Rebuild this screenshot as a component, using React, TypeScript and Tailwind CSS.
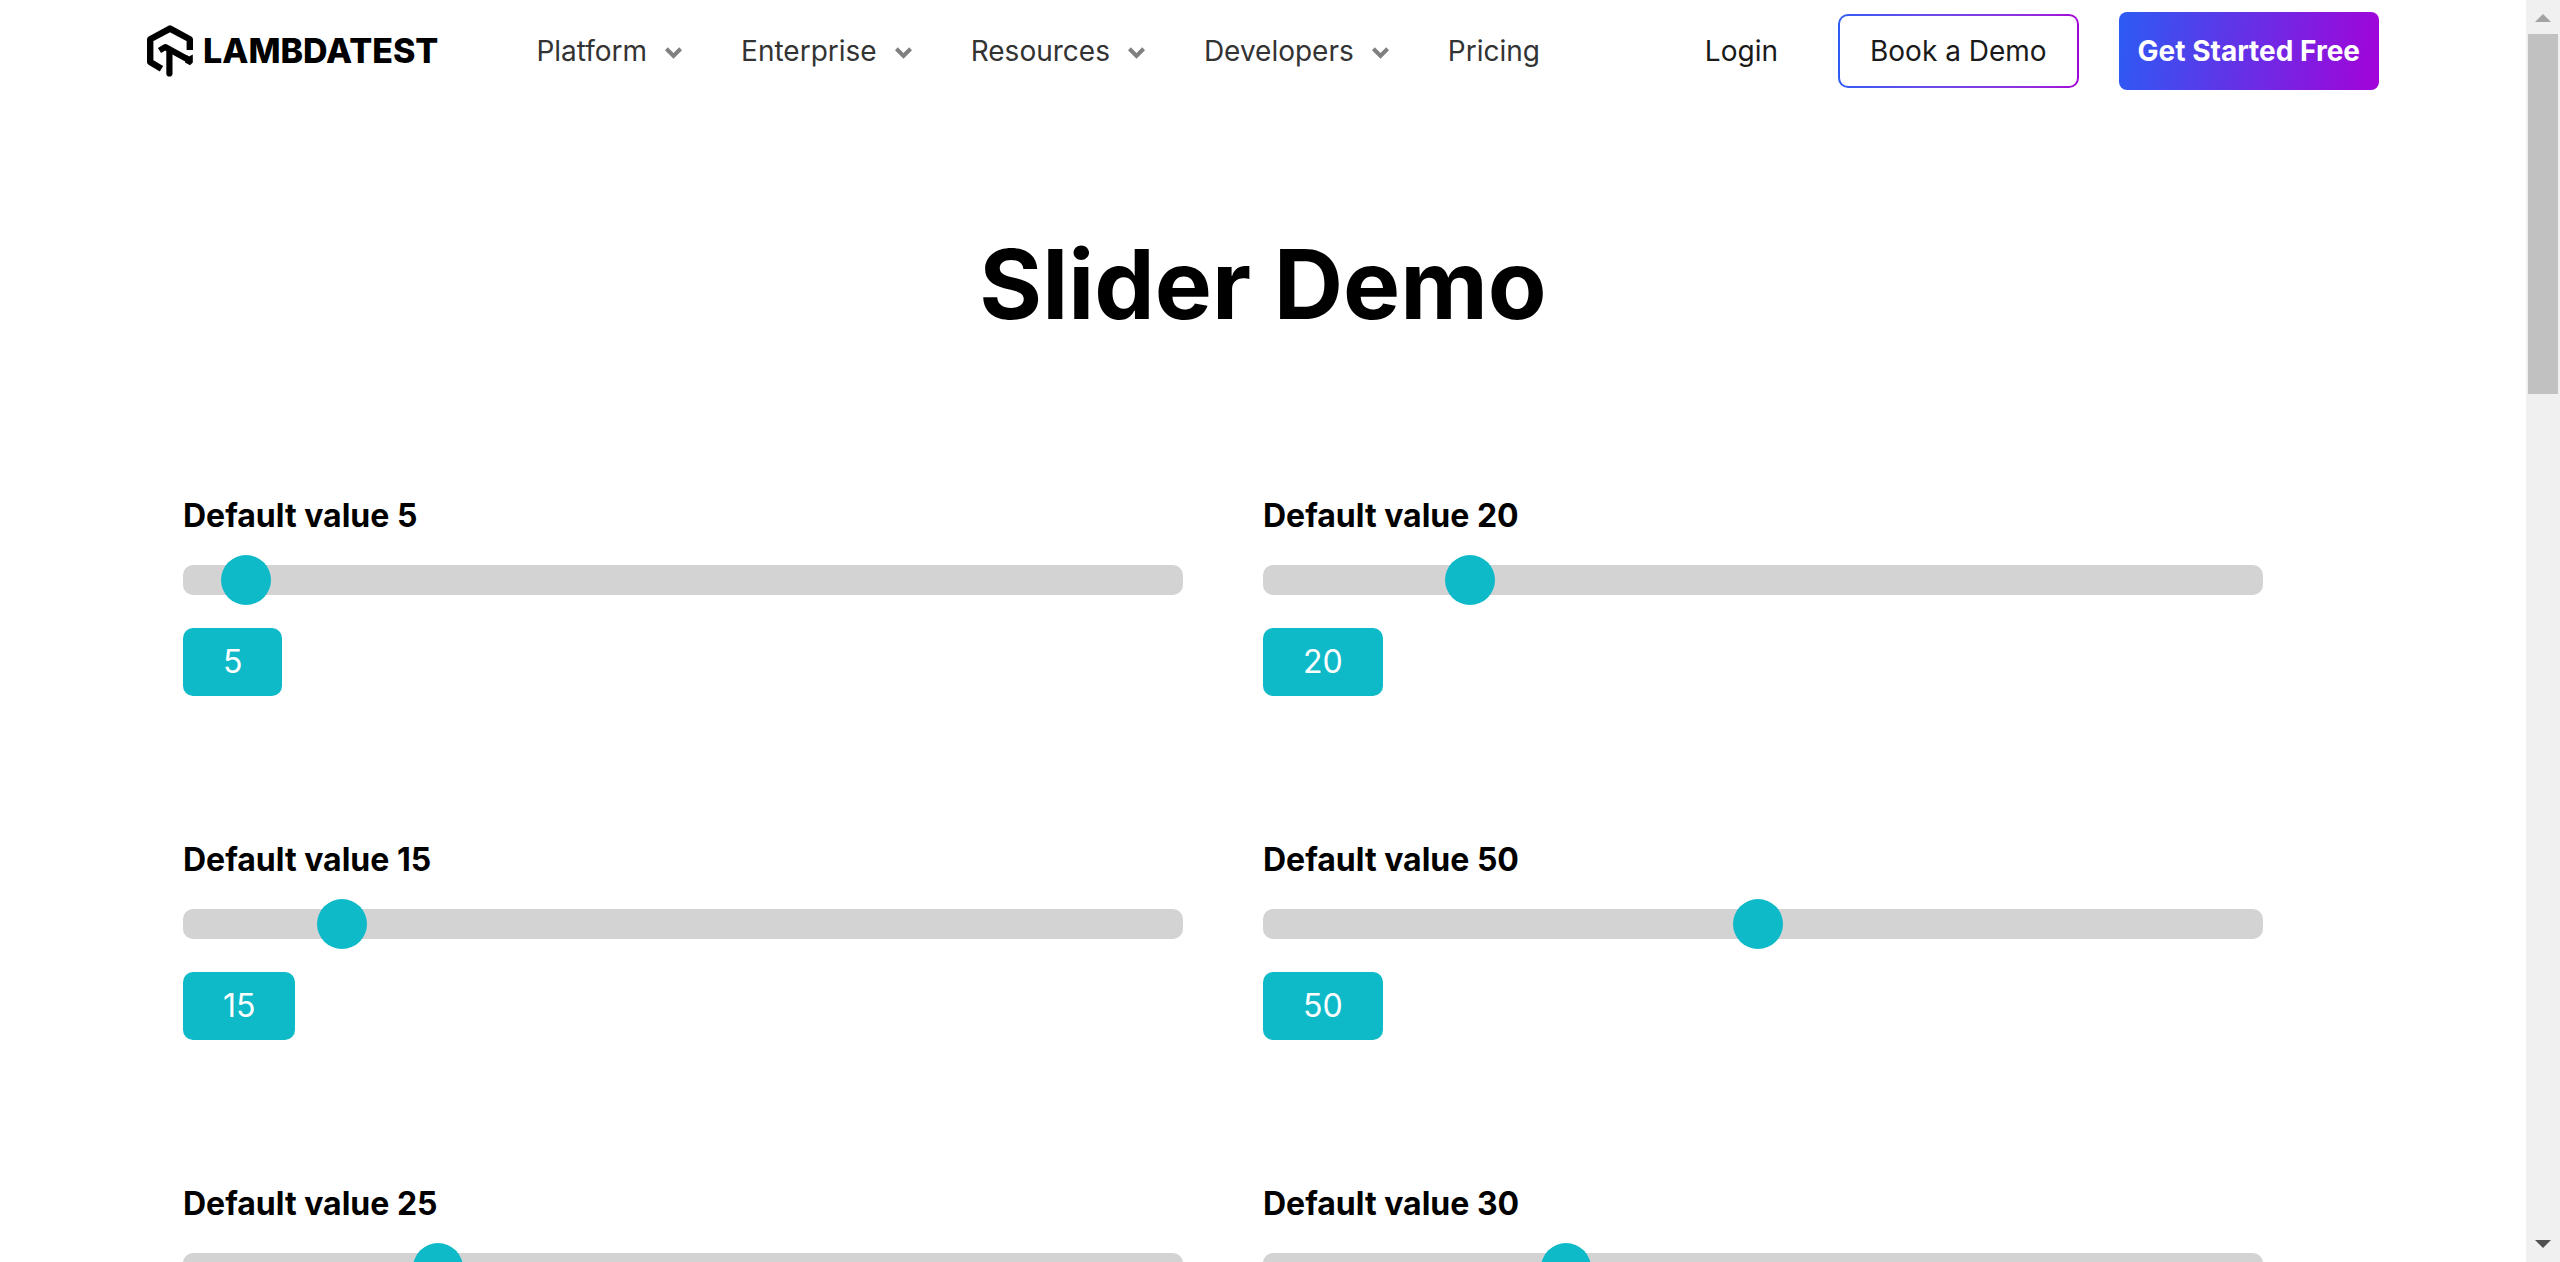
import { useState } from "react";

const menus = ["Platform", "Enterprise", "Resources", "Developers"];
const defaults = [5, 20, 15, 50, 25, 30];

function Chevron() {
  return (
    <svg className="mt-1 h-3 w-[17px]" viewBox="0 0 16 11" fill="#808080" aria-hidden="true">
      <path d="M0 3 2.6 0.2 8 5.4 13.4 0.2 16 3 8 11Z" />
    </svg>
  );
}

function Logo() {
  return (
    <a href="#" aria-label="LambdaTest" className="flex items-center gap-[10px] text-black">
      <svg className="h-[52px] w-[46px]" viewBox="0 0 46 52" fill="none" stroke="currentColor" strokeWidth="6.4" aria-hidden="true">
        <path d="M14.5 43.8 3.2 37V14.3L23 3.6 42.8 14.3V25" strokeLinejoin="round" />
        <path d="M22.4 25V48.5" strokeLinecap="round" strokeWidth="6.2" />
        <path d="M12.5 25.5 18.2 22 41 34.5" strokeLinejoin="round" strokeWidth="6" />
        <path d="M39.5 30 42 31.4 45.8 29.4V37.6L43 40.2 38 37.6Z" fill="currentColor" stroke="none" />
      </svg>
      <span className="text-[34px] leading-10 font-extrabold">LAMBDATEST</span>
    </a>
  );
}

function Slider({ initial }: { initial: number }) {
  const [value, setValue] = useState(initial);
  const id = "range-" + initial;
  return (
    <div className="mr-20 h-[344px]">
      <label htmlFor={id} className="block text-[32px] leading-12 font-bold">
        Default value {initial}
      </label>
      <input
        id={id}
        type="range"
        min={1}
        max={100}
        value={value}
        onChange={(e) => setValue(Number(e.target.value))}
        className="mt-[25px] block h-[30px] w-full cursor-pointer appearance-none rounded-[10px] bg-[#d3d3d3] outline-none [&::-webkit-slider-thumb]:size-[50px] [&::-webkit-slider-thumb]:appearance-none [&::-webkit-slider-thumb]:rounded-full [&::-webkit-slider-thumb]:bg-[#0ebac8]"
      />
      <output
        htmlFor={id}
        className="mt-[33px] inline-block rounded-[10px] bg-[#0ebac8] px-10 py-[10px] text-[32px] leading-12 font-normal text-white"
      >
        {value}
      </output>
    </div>
  );
}

function Header() {
  return (
    <header className="mx-auto flex h-[102px] w-full max-w-[2232px] items-center text-[28px] leading-10 font-normal">
      <Logo />
      <nav className="ml-[98px] flex items-center gap-[59px] text-[#333333]">
        {menus.map((name) => (
          <button key={name} type="button" className="flex items-center gap-[18px]">
            {name}
            <Chevron />
          </button>
        ))}
        <a href="#">Pricing</a>
      </nav>
      <div className="ml-auto flex items-center text-[#1a1a1a]">
        <a href="#" className="mr-[60px]">Login</a>
        <button
          type="button"
          className="mr-10 rounded-[10px] bg-linear-to-r from-[#2c5bf4] to-[#a303d8] p-[2px]"
        >
          <span className="block rounded-lg bg-white px-[30px] py-[15px]">Book a Demo</span>
        </button>
        <button
          type="button"
          className="rounded-lg bg-linear-[99deg] from-[#2c5bf4] to-[#a303d8] px-[19px] py-[19px] font-bold text-white"
        >
          Get Started Free
        </button>
      </div>
    </header>
  );
}

function Scrollbar() {
  return (
    <div aria-hidden="true" className="flex w-[34px] shrink-0 flex-col items-center bg-[#f0f0f0]">
      <svg className="h-[34px] w-4 shrink-0" viewBox="0 0 16 34" fill="#a3a3a3">
        <path d="M8 14 16 22H0Z" />
      </svg>
      <div className="h-[360px] w-[30px] bg-[#c1c1c1]" />
      <svg className="mt-auto h-[34px] w-4 shrink-0" viewBox="0 0 16 34" fill="#505050">
        <path d="M0 12H16L8 20Z" />
      </svg>
    </div>
  );
}

export default function App() {
  return (
    <div className="flex h-screen overflow-hidden bg-white font-[Inter,sans-serif] text-black">
      <div className="min-w-0 flex-1 overflow-hidden">
        <Header />
        <main className="mx-auto max-w-[2160px]">
          <h1 className="mt-[122px] text-center text-[96px] leading-[120px] font-bold">Slider Demo</h1>
          <section className="mt-[148px] grid grid-cols-2">
            {defaults.map((n) => (
              <Slider key={n} initial={n} />
            ))}
          </section>
        </main>
      </div>
      <Scrollbar />
    </div>
  );
}
